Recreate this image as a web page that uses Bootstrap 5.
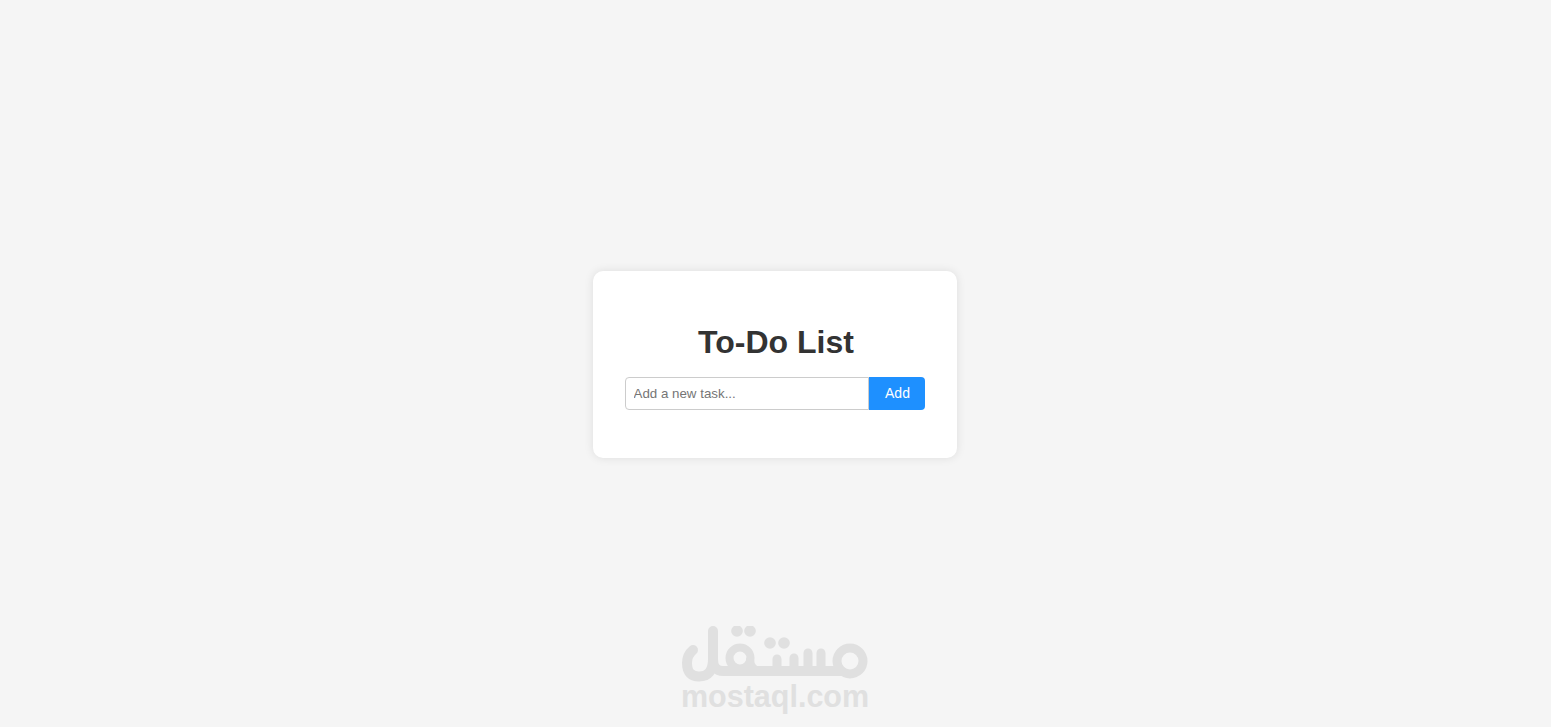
<!DOCTYPE html>
<html lang="en">
<head>
<meta charset="utf-8">
<title>To-Do List</title>
<link href="https://cdn.jsdelivr.net/npm/bootstrap@5.3.0/dist/css/bootstrap.min.css" rel="stylesheet">
<style>
body.todo-page { background:#f5f5f5; font-family:"Liberation Sans",Arial,sans-serif; height:727px; overflow:hidden; position:relative; }
.todo-shell { height:729px; width:1549px; }
.todo-card { width:364px; height:187px; padding:32px; background:#fff; border:0; border-radius:10px; box-shadow:0 0 10px rgba(0,0,0,.1); }
.todo-title { font-size:32px; font-weight:700; line-height:37px; color:#333; margin:21px 0 16px; padding-left:3px; text-align:center; }
.todo-input { height:33px; font-size:13.333px; font-family:"Liberation Sans",Arial,sans-serif; padding:0 8px; border:1px solid #ccc; border-radius:4px 0 0 4px; color:#333; }
.todo-input::placeholder { color:#757575; opacity:1; }
.todo-add { width:56px; height:33px; padding:0 0 0 2px; font-size:14px; font-family:"Liberation Sans",Arial,sans-serif; background:#1e90ff; color:#fff; border:0; border-radius:0 4px 4px 0; }
.todo-mark { position:absolute; left:681px; top:626px; width:188px; height:86px; color:#e0e0e0; }
.todo-mark svg { display:block; }
.todo-mark-text { font-size:30.5px; font-weight:700; line-height:30px; text-align:center; margin-top:-1px; white-space:nowrap; }
</style>
</head>
<body class="todo-page">
<main class="todo-shell d-flex justify-content-center align-items-center">
  <section class="card todo-card">
    <h1 class="todo-title">To-Do List</h1>
    <div class="d-flex">
      <input class="form-control todo-input flex-grow-1" type="text" placeholder="Add a new task...">
      <button class="btn todo-add flex-shrink-0" type="button">Add</button>
    </div>
  </section>
</main>
<div class="todo-mark">
  <svg width="188" height="56" viewBox="0 0 188 56" fill="none" stroke="#e0e0e0" stroke-width="9" stroke-linecap="round" stroke-linejoin="round">
    <path d="M32 5V33Q32 50.5 18 50.5Q6 50.5 6 37Q6 29 12 24" stroke-width="10"/>
    <path d="M32 33Q32 45 42 45H160" stroke-width="10"/>
    <circle cx="59" cy="32" r="10.5" stroke-width="8"/>
    <path d="M69 34Q70 45 80 45" stroke-width="8"/>
    <path d="M96 45V33M113 45V32M127 45V27M140 45V27" stroke-width="9"/>
    <circle cx="169" cy="35" r="13" stroke-width="9"/>
    <g fill="#e0e0e0" stroke="none">
      <circle cx="56" cy="5" r="5.8"/><circle cx="69" cy="5" r="5.8"/>
      <circle cx="89" cy="17" r="5.8"/><circle cx="103" cy="17" r="5.8"/>
    </g>
  </svg>
  <div class="todo-mark-text">mostaql.com</div>
</div>
<script src="https://cdn.jsdelivr.net/npm/bootstrap@5.3.0/dist/js/bootstrap.bundle.min.js"></script>
</body>
</html>
